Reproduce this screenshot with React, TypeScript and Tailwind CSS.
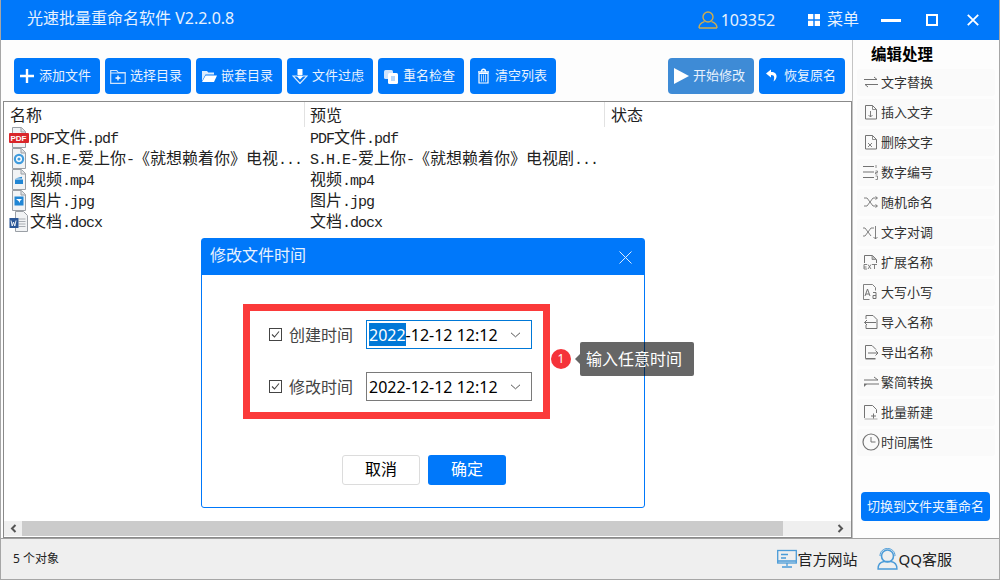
import React from "react";

const SANS = "[font-family:'Noto_Sans','Noto_Sans_CJK_SC',sans-serif]";

const S = ({ children, w = 16, h = 16, vb }: { children: React.ReactNode; w?: number; h?: number; vb?: string }) => (
  <svg width={w} height={h} viewBox={vb ?? `0 0 ${w} ${h}`} fill="none" className="shrink-0">
    {children}
  </svg>
);

/* Toolbar icons */
const IPlus = () => (
  <S>
    <path d="M8 1v14M1 8h14" stroke="#fff" strokeWidth="2.4" />
  </S>
);
const IFolderPlus = () => (
  <S>
    <path d="M.7 2.5h6l1.5 2h7v10.8H.7z" stroke="#cfe4fc" strokeWidth="1.2" />
    <path d="M.7 5h14.6" stroke="#cfe4fc" />
    <path d="M8 7.5v5M5.5 10h5" stroke="#fff" strokeWidth="1.3" />
  </S>
);
const IFolderOpen = () => (
  <S>
    <path d="M1 3h5l1.3 1.6H13v2H4.5L1 13z" fill="#dcecfd" />
    <path d="M4.6 7.5H16L13 14H1z" fill="#fff" />
  </S>
);
const IFilter = () => (
  <S>
    <path d="M5 8H1l7 7.500L15 8h-4" stroke="#dcecfd" strokeWidth="1.2" />
    <path d="M5.5 1h5v6.500h-5z" fill="#fff" />
    <path d="M4.500 8h7L8 11.500z" fill="#fff" />
  </S>
);
const ICopy = () => (
  <S>
    <rect x="1" y="2" width="9" height="9" rx="1.5" fill="#cfe4fc" />
    <rect x="5" y="5" width="10" height="11" rx="1.5" fill="#fff" />
    <path d="M8 8h4v5H8z" fill="#b8d8fb" />
  </S>
);
const ITrash = () => (
  <S w={13} h={16}>
    <path d="M1 4h11M4.5 3.5c0-3 4-3 4 0" stroke="#fff" strokeWidth="1.3" />
    <path d="M2 5.5h9V15H2z" stroke="#fff" strokeWidth="1.2" />
    <path d="M4.5 6.5v7M6.5 6.5v7M8.5 6.5v7" stroke="#a9d0fb" />
  </S>
);
const IPlay = () => (
  <S w={15} h={16}>
    <path d="M0 0l15 8-15 8z" fill="#fff" />
  </S>
);
const IUndo = () => (
  <S w={12} h={13}>
    <path d="M5 .5L0 4.5l5 4V6c3 0 4 1.5 2.5 6.5C11 11 13 3 5 3z" fill="#fff" />
  </S>
);

/* Sidebar icons */
const G = "#737373";
const ISwap = () => (
  <S>
    <path d="M1 5.5h13L11 3M15 10.5H2L5 13" stroke={G} strokeWidth="1" />
  </S>
);
const Doc = ({ children }: { children?: React.ReactNode }) => (
  <S>
    <path d="M2.5 1.5h7l4 4v9.5h-11z" stroke={G} />
    <path d="M9.5 1.5v4h4" stroke={G} strokeWidth=".8" />
    {children}
  </S>
);
const IDocDown = () => (
  <Doc>
    <path d="M7.5 7v6M5.5 11l2 2 2-2" stroke={G} strokeWidth=".9" />
  </Doc>
);
const IDocX = () => (
  <Doc>
    <path d="M5 9l4 4M9 9l-4 4" stroke={G} strokeWidth=".9" />
  </Doc>
);
const IList = () => (
  <S>
    <path d="M0 2.5h11M0 8h11M0 13.5h11" stroke={G} />
    <path d="M13 1v3M12.5 7h2v1.5h-2V10h2M12.5 12h2v3.5h-2" stroke={G} strokeWidth=".8" />
  </S>
);
const IShuffle = () => (
  <S>
    <path d="M1 4h3l6 8h4M1 12h3l6-8h4M12.5 2.5L14.5 4l-2 1.5M12.5 10.5l2 1.5-2 1.5" stroke={G} strokeWidth=".9" />
  </S>
);
const ICross = () => (
  <S>
    <path d="M0 4h2l6 8M0 12h2l6-8h3" stroke={G} strokeWidth=".9" />
    <path d="M12.5 2v13M10.5 13l2 2 2-2" stroke={G} strokeWidth=".9" />
  </S>
);
const IExt = () => (
  <S>
    <path d="M1.5 9V1.5h8l4 4V9" stroke={G} />
    <path d="M9 1.5v4h4" fill="#bbb" stroke={G} strokeWidth=".7" />
    <path d="M1 10.5h3M1 10.5v4.5h3M1 13h2.5M5 10.5l3 4.5M8 10.5l-3 4.5M9 10.5h5M11.5 10.5V15" stroke={G} strokeWidth=".9" />
  </S>
);
const IAa = () => (
  <S>
    <path d="M.5 15.5V.5h9l3 3v3M.5 15.5h6" stroke={G} strokeWidth=".9" />
    <path d="M2 12l2.5-7L7 12M3 10h3" stroke={G} />
    <path d="M10 8.5h3v6h-3v-3h3" stroke={G} />
  </S>
);
const IImport = () => (
  <S>
    <path d="M3 5V1.5h7l4 4V14.5H3V11" stroke={G} />
    <path d="M13 8.5H1.5M4 6l-2.5 2.5L4 11" stroke={G} />
  </S>
);
const IExport = () => (
  <S>
    <path d="M13 5.5l-4-4H2.5V14.5h10" stroke={G} />
    <path d="M2.5 15.5h10" stroke="#bbb" />
    <path d="M5 9h10M12.5 6.5L15 9l-2.5 2.5" stroke={G} />
  </S>
);
const IConv = () => (
  <S w={18} h={16}>
    <path d="M2 6h14L12 3" stroke={G} strokeWidth="1" />
    <path d="M17 10H2" stroke={G} strokeWidth="1" />
    <path d="M2 10l3 0-3 3z" fill={G} />
  </S>
);
const IDocPlus = () => (
  <S>
    <path d="M1.5 14V1.5h8l4 4V9" stroke={G} />
    <path d="M1.5 15h13" stroke="#aaa" />
    <path d="M10.5 9.5v5M8 12h5" stroke={G} />
  </S>
);
const IClock = () => (
  <S w={18} h={18}>
    <circle cx="9" cy="9" r="8" stroke={G} strokeWidth="1.2" />
    <path d="M9 4v5h4.5" stroke={G} />
  </S>
);

/* File icons */
const Page = ({ children }: { children?: React.ReactNode }) => (
  <S w={20} h={21}>
    <path d="M3.5 .5h9l4 4v16h-13z" fill="#f1f3f5" stroke="#9a9fa5" />
    <path d="M12 .5v4.500h4.500" stroke="#9a9fa5" fill="#dfe2e5" />
    {children}
  </S>
);
const FPdf = () => (
  <Page>
    <rect x="0" y="6" width="20" height="10" rx="1" fill="#d9262a" />
    <text x="1.5" y="14" fontSize="8" fontWeight="700" fill="#fff" fontFamily="'Liberation Sans',sans-serif">
      PDF
    </text>
  </Page>
);
const FAudio = () => (
  <Page>
    <circle cx="10" cy="11" r="5.2" fill="#3f9bdd" />
    <circle cx="10" cy="11" r="3" fill="#fff" />
    <circle cx="10" cy="11" r="1.6" fill="#3f9bdd" />
  </Page>
);
const FVideo = () => (
  <Page>
    <path d="M6 9.5l7-1.8v1.8zM6 10.5h8V15H6z" fill="#2186d4" />
  </Page>
);
const FImage = () => (
  <Page>
    <rect x="5.5" y="6.5" width="9" height="9" fill="#2186d4" />
    <path d="M7 9h6l-2 2v2l-1-1.5z" fill="#fff" />
  </Page>
);
const FWord = () => (
  <S w={20} h={21}>
    <path d="M6.5 .5h8l4 4v16h-12z" fill="#f1f3f5" stroke="#9a9fa5" />
    <path d="M9.5 8h7M9.5 10.500h7M9.500 13h7M9.500 15.500h7" stroke="#a8adb3" />
    <rect x="0.500" y="7" width="9" height="10" fill="#2b5797" />
    <path d="M2 9.500l1.200 5.500 1.300-4 1.300 4L7 9.500" stroke="#fff" strokeWidth=".9" />
  </S>
);

const Mono = ({ text }: { text: string }) => (
  <span className="whitespace-pre">
    {text.split(/([\x00-\x7f]+)/).map((p, i) =>
      /^[\x00-\x7f]+$/.test(p) ? (
        <span key={i} className="text-[15px] tracking-[-1px] [font-family:'Liberation_Mono',monospace]">
          {p}
        </span>
      ) : (
        <span key={i}>{p}</span>
      )
    )}
  </span>
);

const ToolBtn = ({ icon, label, className = "bg-[#0078fa]" }: { icon: React.ReactNode; label: string; className?: string }) => (
  <button className={`flex h-9 w-[86px] items-center gap-1 rounded-[4px] pb-[1px] pl-[5px] text-[13px] leading-none text-[#e8f2fe] ${className}`}>
    <span className="flex w-4 shrink-0 justify-center">{icon}</span>
    <span>{label}</span>
  </button>
);

const rows: [React.ReactNode, string, string][] = [
  [<FPdf />, "PDF文件.pdf", "PDF文件.pdf"],
  [<FAudio />, "S.H.E-爱上你-《就想赖着你》电视...", "S.H.E-爱上你-《就想赖着你》电视剧..."],
  [<FVideo />, "视频.mp4", "视频.mp4"],
  [<FImage />, "图片.jpg", "图片.jpg"],
  [<FWord />, "文档.docx", "文档.docx"],
];

const side: [React.ReactNode, string][] = [
  [<ISwap />, "文字替换"],
  [<IDocDown />, "插入文字"],
  [<IDocX />, "删除文字"],
  [<IList />, "数字编号"],
  [<IShuffle />, "随机命名"],
  [<ICross />, "文字对调"],
  [<IExt />, "扩展名称"],
  [<IAa />, "大写小写"],
  [<IImport />, "导入名称"],
  [<IExport />, "导出名称"],
  [<IConv />, "繁简转换"],
  [<IDocPlus />, "批量新建"],
  [<IClock />, "时间属性"],
];

const Check = () => (
  <svg width="14" height="14" viewBox="0 0 14 14" fill="none" className="shrink-0">
    <rect x=".5" y=".5" width="12" height="12" stroke="#444" />
    <path d="M3 6.500l2.500 2.500L10 3.500" stroke="#444" strokeWidth="1.100" />
  </svg>
);

const Chevron = () => (
  <svg width="11" height="6" viewBox="0 0 11 6" fill="none" className="shrink-0">
    <path d="M1 .8l4.500 4 4.500-4" stroke="#555" strokeWidth="1" />
  </svg>
);

const TimeRow = ({ label, active }: { label: string; active?: boolean }) => (
  <div className="flex items-center">
    <Check />
    <span className="ml-[6px] w-[64px] text-base leading-none text-[#444]">{label}</span>
    <div className={`ml-[13px] flex h-[29px] w-[166px] items-center border pl-[2px] text-base leading-none text-black ${active ? "border-[#0078d7]" : "border-[#7a7a7a]"}`}>
      <span className="flex w-[130px] overflow-hidden whitespace-pre [font-family:'Noto_Sans',sans-serif]">
        <span className={active ? "flex h-[23px] items-center bg-[#0078d7] text-white" : "flex h-[23px] items-center"}>2022</span>
        <span className="flex h-[23px] items-center">-12-12 12:12</span>
      </span>
      <span className="ml-[11px]">
        <Chevron />
      </span>
    </div>
  </div>
);

export default function App() {
  return (
    <div className={`relative flex h-[580px] w-[1000px] flex-col overflow-hidden border-x border-b border-[#a6a6a6] bg-[#fdfdfd] ${SANS}`}>
      {/* Title bar */}
      <div className="flex h-10 shrink-0 items-center bg-[#0078fa] text-base leading-none text-[#e6f1fe]">
        <span className="mb-[4px] ml-[26px]">光速批量重命名软件 V2.2.0.8</span>
        <svg width="20" height="18" viewBox="0 0 20 18" fill="none" className="ml-auto">
          <circle cx="10" cy="6" r="5" stroke="#d0ad4d" strokeWidth="1.400" />
          <path d="M1 17c0-5 4-6 5.500-6.500M19 17c0-5-4-6-5.500-6.500M1 17h18" stroke="#d0ad4d" strokeWidth="1.400" />
        </svg>
        <span className="ml-[3px] [font-family:'Noto_Sans',sans-serif] tracking-[-0.1px]">103352</span>
        <svg width="12" height="12" viewBox="0 0 12 12" className="ml-[33px]">
          <path d="M0 0h5.300v5.300H0zM6.700 0H12v5.300H6.700zM0 6.700h5.300V12H0zM6.700 6.700H12V12H6.700z" fill="#fff" />
        </svg>
        <span className="mb-[3px] ml-[7px]">菜单</span>
        <svg width="20" height="4" viewBox="0 0 20 4" className="ml-[22px] mt-[1px]">
          <path d="M0 0h20v3H0z" fill="#fff" />
        </svg>
        <svg width="12" height="12" viewBox="0 0 12 12" fill="none" className="ml-[25px]">
          <path d="M1 1h10v10H1z" stroke="#fff" strokeWidth="2" />
        </svg>
        <svg width="12" height="12" viewBox="0 0 12 12" fill="none" className="ml-[29px] mr-[20px]">
          <path d="M.8.8l10.400 10.400M11.200.8L.8 11.200" stroke="#fff" strokeWidth="1.800" />
        </svg>
      </div>

      {/* Body */}
      <div className="flex h-[498px] shrink-0">
        <div className="flex w-[851px] shrink-0 flex-col">
          <div className="flex h-[61px] shrink-0 items-end gap-[5px] pb-[7px] pl-[13px] pr-[7px]">
            <ToolBtn icon={<IPlus />} label="添加文件" />
            <ToolBtn icon={<IFolderPlus />} label="选择目录" />
            <ToolBtn icon={<IFolderOpen />} label="嵌套目录" />
            <ToolBtn icon={<IFilter />} label="文件过虑" />
            <ToolBtn icon={<ICopy />} label="重名检查" />
            <span className="ml-px">
              <ToolBtn icon={<ITrash />} label="清空列表" />
            </span>
            <span className="ml-auto">
              <ToolBtn icon={<IPlay />} label="开始修改" className="bg-[#3e8bd6]" />
            </span>
            <ToolBtn icon={<IUndo />} label="恢复原名" />
          </div>

          <div className="ml-[2px] flex min-h-0 flex-1 flex-col border border-[#8a8a8a] bg-white text-base text-[#222]">
            <div className="flex h-[25px] shrink-0 items-center leading-none">
              <span className="w-[300px] pl-[6px]">名称</span>
              <span className="flex h-[25px] w-[300px] items-center border-l border-[#e2e2e2] pl-[5px]">预览</span>
              <span className="flex h-[25px] items-center border-l border-[#e2e2e2] pl-[6px]">状态</span>
            </div>
            <div className="flex-1">
              {rows.map(([icon, a, b], i) => (
                <div key={i} className="flex h-[21px] items-center leading-none">
                  <span className="ml-[5px] flex w-[21px] shrink-0">{icon}</span>
                  <span className="w-[275px] shrink-0">
                    <Mono text={a} />
                  </span>
                  <span className="ml-[5px]">
                    <Mono text={b} />
                  </span>
                </div>
              ))}
            </div>
            <div className="mb-[1px] flex h-[15px] shrink-0 items-center bg-[#efefef]">
              <span className="flex w-[18px] justify-center">
                <svg width="7" height="9" viewBox="0 0 7 9" fill="none">
                  <path d="M5.500 1L2 4.500 5.500 8" stroke="#555" strokeWidth="2" />
                </svg>
              </span>
              <div className="h-full w-[761px] bg-[#cbcbcb]" />
              <span className="ml-auto mr-[7px] flex">
                <svg width="7" height="9" viewBox="0 0 7 9" fill="none">
                  <path d="M1.500 1L5 4.500 1.500 8" stroke="#555" strokeWidth="2" />
                </svg>
              </span>
            </div>
          </div>
        </div>

        {/* Sidebar */}
        <div className="flex flex-1 flex-col border-l border-[#c4c4c4] pl-[4px] pr-[4px]">
          <div className="h-[29px] shrink-0 pl-[14px] pt-[3px] text-[15.500px] font-bold leading-[22px] text-black">
            编辑处理
          </div>
          <div className="flex flex-col gap-[3px]">
            {side.map(([icon, label]) => (
              <div key={label} className="flex h-[27px] items-center rounded-[3px] bg-[#fafafa] pb-[1px] text-[13px] leading-none text-[#333]">
                <span className="flex w-[24px] shrink-0 justify-center pl-[3px]">{icon}</span>
                <span>{label}</span>
              </div>
            ))}
          </div>
          <button className="ml-[4px] mt-[36px] flex h-[29px] w-[129px] items-center justify-center rounded-[4px] bg-[#0078fa] text-[13px] leading-none text-[#eef6fe]">
            切换到文件夹重命名
          </button>
        </div>
      </div>

      {/* Status bar */}
      <div className="flex flex-1 items-center border-t border-[#a0a0a0] bg-[#efefef] leading-none text-[#222]">
        <span className="ml-[12px] text-xs">5 个对象</span>
        <svg width="20" height="20" viewBox="0 0 20 20" fill="none" className="ml-auto">
          <rect x=".7" y="1.500" width="18.600" height="12.500" stroke="#4a9bd8" strokeWidth="1.300" />
          <path d="M4 5.500h7M4 9h5M1 12h18M10 14v3M5 18h10" stroke="#4a9bd8" strokeWidth="1.300" />
        </svg>
        <span className="ml-[1px] text-[15px]">官方网站</span>
        <svg width="21" height="22" viewBox="0 0 21 22" fill="none" className="ml-[19px]">
          <circle cx="10.500" cy="8" r="6" stroke="#4a9bd8" strokeWidth="1.600" />
          <path d="M3 8c0-10 15-10 15 0" stroke="#4a9bd8" strokeWidth="1" />
          <path d="M1 21c0-5 3-7 6-7.500h7c3 .5 6 2.500 6 7.500z" stroke="#4a9bd8" strokeWidth="1.300" />
        </svg>
        <span className="ml-[1px] mr-[47px] text-[15px]">QQ客服</span>
      </div>

      {/* Dialog */}
      <div className="absolute left-[200px] top-[238px] flex h-[270px] w-[444px] flex-col rounded-[3px] border border-[#0078fa] bg-white">
        <div className="flex h-[36px] shrink-0 items-center bg-[#0078fa] pl-[8px] pr-[12px] text-base leading-none text-[#e6f1fe]">
          <span className="mb-[5px]">修改文件时间</span>
          <svg width="13" height="13" viewBox="0 0 13 13" fill="none" className="ml-auto">
            <path d="M.5.500l12 12M12.500.500l-12 12" stroke="#dcecfd" strokeWidth="1" />
          </svg>
        </div>
        <div className="relative ml-[41px] mt-[29px] flex h-[115px] w-[307px] flex-col justify-center gap-[23px] border-[7px] border-[#fb3a3a] pb-[2px] pl-[19px]">
          <TimeRow label="创建时间" active />
          <TimeRow label="修改时间" />
          <div className="absolute left-[301px] top-[38px] flex h-5 w-5 items-center justify-center rounded-full bg-[#f5333a] text-xs leading-none text-white">
            1
          </div>
          <div className="absolute left-[330px] top-[31px] flex h-[34px] w-[114px] items-center rounded-[2px] bg-[rgba(0,0,0,0.6)] pl-[6px] text-base leading-none text-white">
            <span className="absolute -left-[5px] top-[12px] h-0 w-0 border-y-[5px] border-r-[5px] border-y-transparent border-r-[rgba(0,0,0,0.6)]" />
            输入任意时间
          </div>
        </div>
        <div className="ml-[140px] mt-[36px] flex gap-2">
          <button className="h-[30px] w-[78px] rounded-[3px] border border-[#dcdcdc] bg-white pb-[2px] text-base leading-none text-black">取消</button>
          <button className="h-[30px] w-[78px] rounded-[3px] bg-[#0078fa] pb-[2px] text-base leading-none text-white">确定</button>
        </div>
      </div>
    </div>
  );
}
